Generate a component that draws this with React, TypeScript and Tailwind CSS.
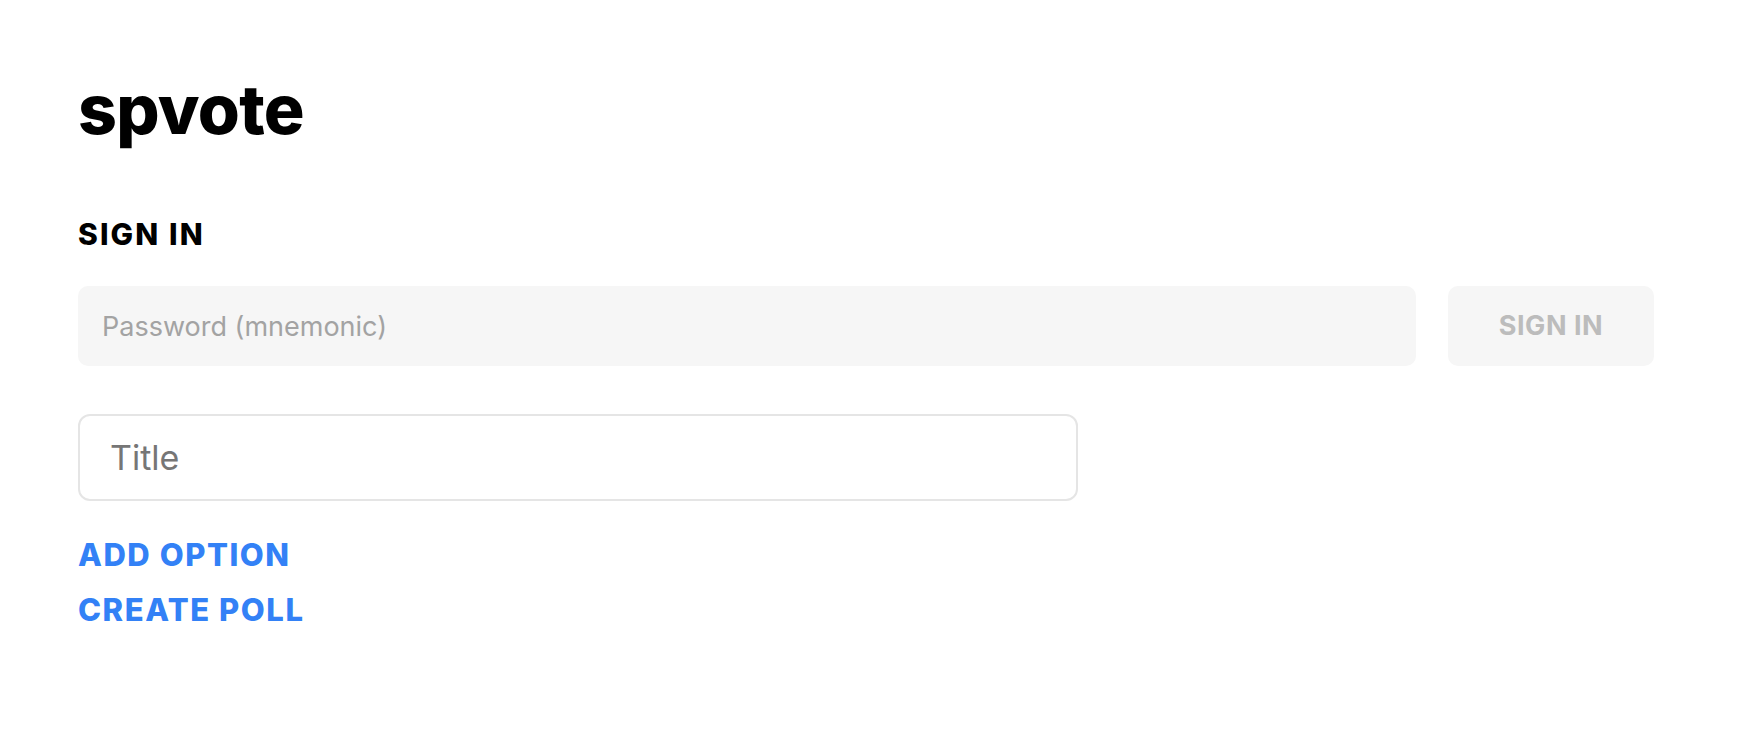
import { useState } from 'react';

export default function App() {
  const [password, setPassword] = useState('');
  const [title, setTitle] = useState('');

  return (
    <div className="min-h-screen bg-white font-['Inter',sans-serif] text-black">
      <div className="pl-[78px] pr-[96px] pt-[75px]">
        <h1 className="text-[68px] font-extrabold leading-none tracking-[-0.01em]">spvote</h1>

        <h2 className="mt-[76px] text-[30px] font-extrabold leading-none tracking-[0.07em]">SIGN IN</h2>

        <div className="mt-[37px] flex gap-[32px]">
          <input
            type="password"
            value={password}
            onChange={(e) => setPassword(e.target.value)}
            placeholder="Password (mnemonic)"
            className="h-[80px] flex-1 rounded-[10px] bg-[#f6f6f6] px-[24px] text-[27px] outline-none placeholder:text-[#a3a3a3]"
          />
          <button
            disabled
            className="h-[80px] w-[206px] rounded-[10px] bg-[#f6f6f6] text-[27px] font-bold tracking-[0.02em] text-[#bcbcbc]"
          >
            SIGN IN
          </button>
        </div>

        <input
          value={title}
          onChange={(e) => setTitle(e.target.value)}
          placeholder="Title"
          className="mt-[48px] block h-[87px] w-[1000px] rounded-[12px] border-2 border-[#e5e5e5] bg-white px-[30px] text-[34px] outline-none placeholder:text-[#767676]"
        />

        <div className="mt-[38px] flex flex-col items-start gap-[24px]">
          <button className="text-[31px] font-extrabold leading-none tracking-[0.05em] text-[#3381f6]">ADD OPTION</button>
          <button className="text-[31px] font-extrabold leading-none tracking-[0.05em] text-[#3381f6]">CREATE POLL</button>
        </div>
      </div>
    </div>
  );
}
